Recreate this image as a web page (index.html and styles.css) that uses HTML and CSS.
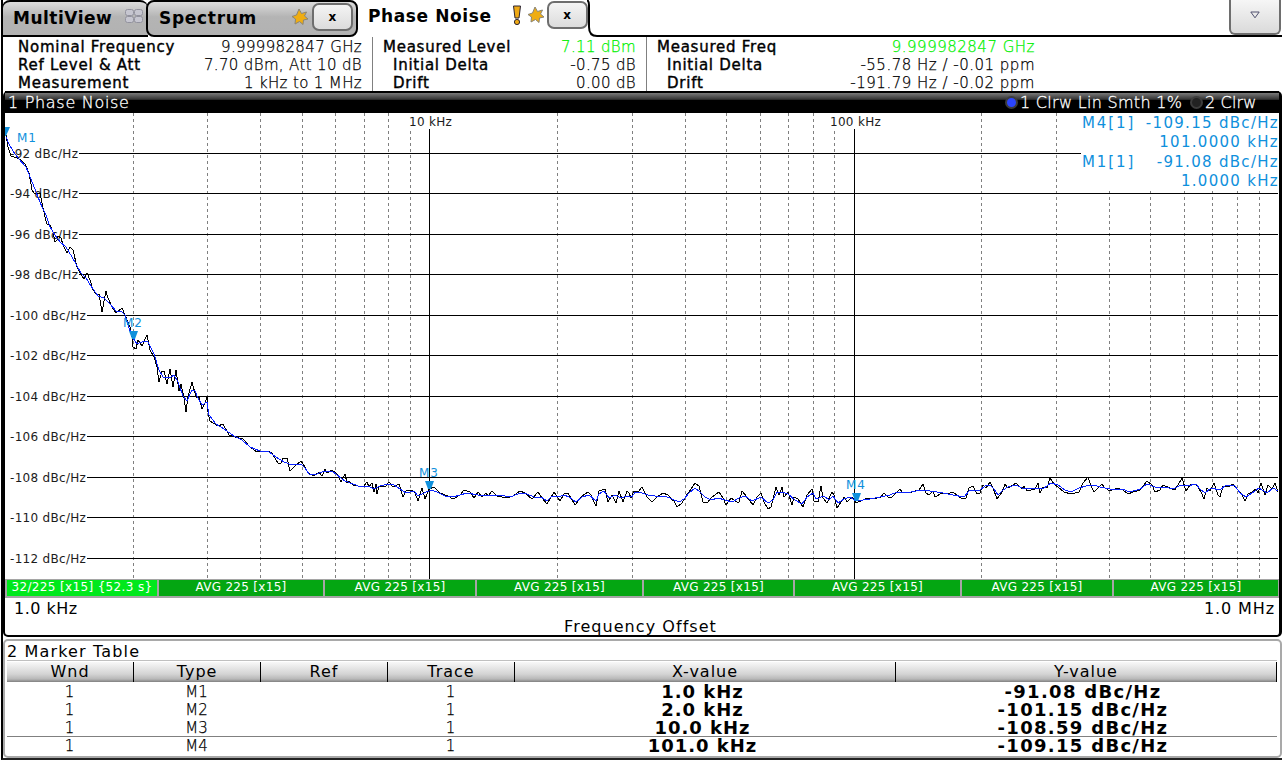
FILE: index.html
```
<!DOCTYPE html>
<html>
<head>
    <meta charset="utf-8">
    <title>Phase Noise</title>
    <link rel="stylesheet" href="styles.css">
</head>
<body>
    <div class="screen">
        <div class="tabs">
            <div class="tab tab-multi">
                <span>MultiView</span>
                <svg class="icon-grid" width="18" height="14" viewBox="0 0 18 14">
                    <rect x=".5" y=".5" width="8" height="6" rx="2"/>
                    <rect x="9.500" y=".5" width="8" height="6" rx="2"/>
                    <rect x=".5" y="7.500" width="8" height="6" rx="2"/>
                    <rect x="9.500" y="7.500" width="8" height="6" rx="2"/>
                </svg>
            </div>
            <div class="tab tab-spectrum">
                <span>Spectrum</span>
                <svg class="icon-star" width="18" height="18" viewBox="0 0 18 18">
                    <path d="M8 1L10.500 5.500L15.500 4L13.500 8L17 11L12.500 12L12 16.500L8.500 13.500L4 16L4.500 11L1 8.500L5.500 7Z"/>
                </svg>
                <button class="close">x</button>
            </div>
            <div class="tab tab-active">
                <span>Phase Noise</span>
                <svg class="icon-warn" width="10" height="21" viewBox="0 0 10 21">
                    <path d="M1.500 1H8.500L7 13H3Z"/>
                    <circle cx="5" cy="17" r="2.600"/>
                </svg>
                <svg class="icon-star" width="18" height="18" viewBox="0 0 18 18">
                    <path d="M8 1L10.500 5.500L15.500 4L13.500 8L17 11L12.500 12L12 16.500L8.500 13.500L4 16L4.500 11L1 8.500L5.500 7Z"/>
                </svg>
                <button class="close">x</button>
            </div>
            <svg class="tab-edge" width="12" height="37" viewBox="0 0 12 37">
                <path d="M0 0Q2 1 2 5V27Q2 36 10 36H12"/>
            </svg>
            <div class="tab-rest">
                <button class="menu">
                    <svg width="10" height="8" viewBox="0 0 10 8"><path d="M.8 1H9.200L5 6.800Z"/></svg>
                </button>
            </div>
        </div>

        <div class="info">
            <div class="info-col col-a">
                <div class="row"><b>Nominal Frequency</b><span>9.999982847 GHz</span></div>
                <div class="row"><b>Ref Level &amp; Att</b><span>7.70 dBm, Att 10 dB</span></div>
                <div class="row"><b>Measurement</b><span>1 kHz to 1 MHz</span></div>
            </div>
            <div class="info-col col-b">
                <div class="row"><b>Measured Level</b><span class="green">7.11 dBm</span></div>
                <div class="row sub"><b>Initial Delta</b><span>-0.75 dB</span></div>
                <div class="row sub"><b>Drift</b><span>0.00 dB</span></div>
            </div>
            <div class="info-col col-c">
                <div class="row"><b>Measured Freq</b><span class="green">9.999982847 GHz</span></div>
                <div class="row sub"><b>Initial Delta</b><span>-55.78 Hz / -0.01 ppm</span></div>
                <div class="row sub"><b>Drift</b><span>-191.79 Hz / -0.02 ppm</span></div>
            </div>
        </div>

        <div class="chart">
            <div class="chart-title">
                <span class="name">1 Phase Noise</span>
                <i class="led on"></i><span class="trace-1">1 Clrw Lin Smth 1%</span>
                <i class="led"></i><span class="trace-2">2 Clrw</span>
            </div>
            <div class="plot-wrap">
                <svg class="plot" width="1273" height="466" viewBox="5 113 1273 466">
                    <path class="minor" d="M133.500 113V579M207.500 113V579M260.500 113V579M302.500 113V579M335.500 113V579M364.500 113V579M388.500 113V579M410.500 131V579M557.500 113V579M632.500 113V579M685.500 113V579M726.500 113V579M760.500 113V579M788.500 113V579M813.500 113V579M834.500 131V579M981.500 113V579M1056.500 113V579M1109.500 191V579M1150.500 191V579M1184.500 191V579M1212.500 191V579M1237.500 191V579M1259.500 191V579"/>
                    <path class="major" d="M429.500 129V579M854.500 129V579M79 153.500H1081M79 193.500H1278M79 234.500H1278M79 274.500H1278M87 315.500H1278M87 355.500H1278M87 396.500H1278M87 436.500H1278M87 477.500H1278M87 517.500H1278M87 558.500H1278"/>
                    <g class="y-labels">
                        <text x="10" y="158">-92 dBc/Hz</text>
                        <text x="10" y="198">-94 dBc/Hz</text>
                        <text x="10" y="239">-96 dBc/Hz</text>
                        <text x="10" y="279">-98 dBc/Hz</text>
                        <text x="10" y="320">-100 dBc/Hz</text>
                        <text x="10" y="360">-102 dBc/Hz</text>
                        <text x="10" y="401">-104 dBc/Hz</text>
                        <text x="10" y="441">-106 dBc/Hz</text>
                        <text x="10" y="482">-108 dBc/Hz</text>
                        <text x="10" y="522">-110 dBc/Hz</text>
                        <text x="10" y="563">-112 dBc/Hz</text>
                    </g>
                    <text class="x-label" x="409" y="126">10 kHz</text>
                    <text class="x-label" x="830" y="126">100 kHz</text>
                    <polyline class="raw" points="6,135 8,147 11,156 17,158 21,160 25,164 29,173 32,190 34,193 40,193 42,203 45,217 47,224 50,225 53,232 55,242 57,240 58,236 61,238 63,245 67,253 70,247 73,250 77,267 80,273 84,279 87,273 90,280 93,290 97,295 99,294 102,312 106,291 108,298 112,307 116,313 122,308 125,315 130,327 132,337 133,347 136,349 138,340 142,346 147,335 150,350 154,357 157,367 159,382 162,371 164,371 167,384 170,369 173,387 176,370 179,391 181,384 184,398 186,412 188,397 192,382 196,397 199,397 202,409 205,403 207,397 208,412 210,421 218,426 223,424 229,435 235,437 243,439 250,447 257,452 267,451 272,453 276,460 278,463 281,463 283,458 287,458 290,471 295,466 301,461 305,467 308,473 314,476 319,472 322,476 325,469 327,473 332,470 337,474 341,482 345,474 347,483 349,481 353,485 358,486 363,487 367,482 369,487 372,483 374,492 376,484 377,494 379,486 385,487 389,482 393,487 399,484 403,497 406,491 412,490 415,493 418,501 422,488 425,499 429,489 434,487 440,493 448,496 453,499 460,495 464,490 470,492 474,498 478,492 482,497 486,493 488,496 492,491 497,496 507,498 513,496 520,491 525,493 532,499 538,492 542,498 547,504 554,492 560,501 564,494 568,493 575,505 582,496 588,492 591,495 596,506 599,491 605,489 608,502 612,495 616,503 619,491 623,502 627,491 629,493 631,498 634,491 638,492 642,487 647,497 652,502 657,497 663,493 668,495 672,500 674,501 677,507 682,503 686,496 691,489 695,483 699,486 703,502 707,503 712,497 719,492 723,498 726,505 731,498 737,502 739,502 742,491 747,497 753,505 757,497 761,493 764,502 768,509 771,507 774,495 776,487 779,495 782,487 784,497 788,492 792,505 794,497 798,499 803,507 807,495 812,489 814,501 818,502 821,486 823,498 827,503 832,492 834,495 837,508 841,502 844,497 847,502 852,497 856,503 863,500 868,498 877,498 881,497 884,493 888,497 892,497 900,489 903,493 912,492 919,490 923,484 926,493 929,495 933,491 935,497 942,493 947,494 953,492 957,495 962,499 966,498 969,488 973,486 977,494 980,493 983,485 986,488 990,482 993,488 997,499 1002,492 1005,484 1008,488 1016,483 1022,489 1024,486 1027,491 1035,489 1038,483 1040,493 1043,487 1047,488 1050,478 1054,484 1058,487 1064,492 1071,494 1079,492 1083,483 1088,477 1091,486 1094,492 1102,484 1105,488 1110,491 1117,488 1123,490 1128,494 1133,492 1140,490 1147,481 1152,485 1155,492 1160,490 1163,485 1170,488 1175,490 1182,478 1186,491 1190,485 1196,484 1201,492 1204,499 1207,488 1210,491 1214,483 1218,495 1220,497 1223,486 1230,486 1233,484 1237,489 1242,495 1245,501 1248,494 1252,492 1256,489 1258,493 1261,483 1265,495 1268,485 1272,489 1275,483 1278,492"/>
                    <polyline class="smooth" points="6,137 9,144 13,151 18,158 26,167 31,179 36,192 42,207 46,215 50,227 55,235 60,242 66,247 72,257 76,264 81,273 86,278 91,286 98,296 104,298 110,304 116,311 122,312 125,315 129,328 133,338 137,344 144,341 148,342 154,354 159,370 163,377 170,378 174,375 178,382 183,396 187,401 192,390 195,391 198,398 202,405 207,402 209,415 216,424 224,429 234,436 242,440 250,447 260,451 269,452 276,457 284,462 292,465 301,464 305,468 309,474 314,475 322,472 332,471 337,475 345,481 353,484 361,487 368,486 374,489 380,486 388,484 394,485 400,489 406,493 414,491 418,496 424,493 431,490 437,492 445,496 453,497 460,495 467,493 478,495 490,495 505,496 513,496 520,493 527,494 534,497 541,497 547,501 552,496 558,497 564,495 569,497 576,502 582,497 589,495 596,501 599,494 604,491 609,498 615,495 621,498 627,496 632,497 635,492 642,493 648,495 655,496 665,496 672,499 679,502 684,499 689,493 695,488 700,492 705,497 711,500 718,498 725,500 732,502 739,498 745,496 752,501 761,497 768,503 773,500 777,492 782,492 788,494 795,500 802,504 807,497 813,493 816,499 824,496 829,500 833,496 838,503 844,499 850,497 856,501 863,500 870,499 880,497 890,495 897,492 907,493 920,490 930,491 943,493 953,495 964,497 970,490 980,490 985,486 990,485 994,489 998,495 1003,490 1008,487 1016,485 1022,488 1032,488 1044,488 1051,483 1058,485 1065,490 1071,492 1079,488 1086,486 1094,485 1100,487 1110,489 1122,489 1130,492 1140,489 1147,484 1155,487 1165,487 1173,489 1181,485 1187,486 1196,484 1200,489 1205,493 1211,488 1220,490 1226,485 1235,486 1240,493 1246,497 1252,493 1259,488 1267,493 1273,488 1278,491"/>
                    <g class="markers">
                        <path d="M5 127H10L6 136H5Z"/>
                        <path d="M129 331H138L135 339H132Z"/>
                        <path d="M425 481H434L431 489H428Z"/>
                        <path d="M852 493H861L858 501H855Z"/>
                        <text x="17" y="142">M1</text>
                        <text x="123" y="327">M2</text>
                        <text x="419" y="477">M3</text>
                        <text x="846" y="489">M4</text>
                    </g>
                </svg>
                <div class="readout">
                    <div><span>M4[1]</span><span>-109.15 dBc/Hz</span></div>
                    <div><span></span><span>101.0000 kHz</span></div>
                    <div><span>M1[1]</span><span>-91.08 dBc/Hz</span></div>
                    <div><span></span><span>1.0000 kHz</span></div>
                </div>
            </div>
            <div class="avg-bar">
                <div class="running">32/225 [x15] {52.3 s}</div>
                <div>AVG 225 [x15]</div>
                <div>AVG 225 [x15]</div>
                <div>AVG 225 [x15]</div>
                <div>AVG 225 [x15]</div>
                <div>AVG 225 [x15]</div>
                <div>AVG 225 [x15]</div>
                <div>AVG 225 [x15]</div>
            </div>
            <div class="range"><span>1.0 kHz</span><span class="stop">1.0 MHz</span></div>
            <div class="axis-name">Frequency Offset</div>
        </div>

        <div class="marker-table">
            <div class="table-title">2 Marker Table</div>
            <div class="thead">
                <span>Wnd</span><span>Type</span><span>Ref</span><span>Trace</span><span>X-value</span><span>Y-value</span>
            </div>
            <div class="tr"><span>1</span><span>M1</span><span></span><span>1</span><b class="xv">1.0 kHz</b><b class="yv">-91.08 dBc/Hz</b></div>
            <div class="tr"><span>1</span><span>M2</span><span></span><span>1</span><b class="xv">2.0 kHz</b><b class="yv">-101.15 dBc/Hz</b></div>
            <div class="tr"><span>1</span><span>M3</span><span></span><span>1</span><b class="xv">10.0 kHz</b><b class="yv">-108.59 dBc/Hz</b></div>
            <div class="tr last"><span>1</span><span>M4</span><span></span><span>1</span><b class="xv">101.0 kHz</b><b class="yv">-109.15 dBc/Hz</b></div>
        </div>
    </div>
</body>
</html>
```
FILE: styles.css
```
* {
    box-sizing: border-box;
}
body {
    margin: 0;
    background: #fff;
    color: #000;
    font-family: "DejaVu Sans", Verdana, sans-serif;
    font-size: 15px;
    overflow: hidden;
}
.screen {
    width: 1281px;
    height: 760px;
    border-left: 2px solid #000;
    border-bottom: 2px solid #222;
    margin-left: 1px;
    white-space: nowrap;
}

/* tabs */
.tabs {
    display: flex;
    height: 37px;
    margin-left: -1px;
}
.tab {
    display: flex;
    align-items: center;
    font-size: 17px;
    font-weight: bold;
    height: 37px;
}
.tab-multi, .tab-spectrum {
    border: 2px solid #000;
    background: linear-gradient(#dcdcdc, #b4b4b4 45%, #b2b2b2);
}
.tab-multi {
    width: 146px;
    padding-left: 10px;
    letter-spacing: 0.5px;
    border-radius: 8px 8px 0 0;
    gap: 13px;
    border-left-width: 1px;
    border-right: none;
}
.tab-multi span, .tab-spectrum span {
    margin-top: -1px;
}
.tab-spectrum {
    width: 212px;
    margin-left: -2px;
    padding-left: 11px;
    letter-spacing: 0.7px;
    border-radius: 8px;
}
.tab-spectrum .icon-star {
    margin-left: 34px;
}
.tab-active {
    width: 229px;
    padding-left: 10px;
    padding-bottom: 5px;
    letter-spacing: 0.6px;
}
.tab-active .icon-star {
    margin-left: 5px;
}
.icon-warn {
    margin-left: 20px;
}
.tab svg {
    flex: none;
}
.icon-grid {
    margin-top: -5px;
}
.icon-grid rect {
    fill: #c6c6d0;
    stroke: #92929e;
}
.tab-spectrum .icon-star {
    margin-top: -4px;
}
.tab-active svg {
    margin-top: -2px;
}
.icon-star path {
    fill: #efad12;
    stroke: #8a8577;
}
.icon-warn path, .icon-warn circle {
    fill: #efa914;
    stroke: #2c2533;
}
.close {
    width: 41px;
    height: 28px;
    padding: 0;
    border: 2px solid #6e6e6e;
    border-radius: 7px;
    background: linear-gradient(#f4f4f4, #dcdcdc);
    font: bold 12px "DejaVu Sans", sans-serif;
    flex: none;
}
.tab-spectrum .close {
    margin-left: 3px;
    margin-top: -4px;
}
.tab-active .close {
    margin-left: 2px;
    margin-top: -2px;
}
.tab-edge {
    flex: none;
}
.tab-edge path {
    fill: none;
    stroke: #000;
    stroke-width: 2;
}
.tab-rest {
    flex: 1;
    display: flex;
    justify-content: flex-end;
    align-items: flex-start;
    border-bottom: 2px solid #000;
}
.menu {
    width: 52px;
    height: 35px;
    margin-right: 1px;
    padding: 0 0 4px;
    border: 2px solid #6e6e6e;
    border-top: none;
    border-radius: 0 0 6px 6px;
    background: linear-gradient(#f6f6f6, #dadada);
}
.menu path {
    fill: none;
    stroke: #50506e;
}

/* channel info */
.info {
    display: flex;
    height: 54px;
}
.info-col {
    border-right: 1px solid #808080;
}
.col-a {
    width: 370px;
    padding: 0 10px 0 15px;
}
.col-b {
    width: 274px;
    padding: 0 10px;
}
.col-c {
    width: 397px;
    padding: 0 9px 0 10px;
    border-right: none;
}
.row {
    display: flex;
    justify-content: space-between;
    height: 18px;
    line-height: 20px;
}
.row b {
    font-weight: normal;
    letter-spacing: 0.75px;
    -webkit-text-stroke: 0.4px #000;
}
.row span {
    font-weight: 200;
    letter-spacing: 0.35px;
    -webkit-text-stroke: 0.25px;
}
.col-c .row span {
    letter-spacing: 0.5px;
}
.sub b {
    margin-left: 10px;
}
.row .green {
    color: #00f000;
}

/* chart window */
.chart {
    height: 546px;
    width: 1279px;
    border: solid #000;
    border-width: 0 3px 2px 2px;
    border-radius: 5px;
}
.chart-title {
    display: flex;
    align-items: center;
    height: 22px;
    background: linear-gradient(#000 0, #000 9%, #777 10%, #333 38%, #000 42%);
    color: #fff;
    font-size: 16px;
    padding-left: 3px;
}
.chart-title .name {
    width: 997px;
    letter-spacing: 0.7px;
}
.chart-title span {
    font-weight: 200;
    -webkit-text-stroke: 0.3px;
}
.led {
    width: 13px;
    height: 13px;
    border-radius: 50%;
    border: 2px solid #3c3c3c;
    background: #222;
    margin-right: 2px;
    flex: none;
}
.led.on {
    background: #2b45ff;
}
.trace-1 {
    width: 170px;
    letter-spacing: 0.3px;
}
.trace-2 {
    letter-spacing: 0.15px;
}
.plot-wrap {
    position: relative;
    height: 466px;
}
.plot {
    display: block;
}
.minor {
    stroke: #808080;
    stroke-dasharray: 3 3;
    shape-rendering: crispEdges;
}
.major {
    stroke: #000;
    shape-rendering: crispEdges;
}
.y-labels, .x-label {
    font-size: 12px;
    letter-spacing: 0.3px;
    fill: #1c1c1c;
}
.raw, .smooth {
    fill: none;
    stroke: #000;
    shape-rendering: crispEdges;
}
.smooth {
    stroke: #0a22ff;
}
.markers {
    fill: #0f90dc;
    font-size: 12px;
    letter-spacing: 0.9px;
}
/* sits over the upper right corner of the grid */
.readout {
    position: absolute;
    top: 0;
    right: 0;
    width: 197px;
    height: 77px;
    background: #fff;
    color: #0f90dc;
}
.readout div {
    display: flex;
    justify-content: space-between;
    height: 19.4px;
    line-height: 20px;
    letter-spacing: 1.3px;
}
.readout span:first-child {
    letter-spacing: 1.9px;
}

/* average progress */
.avg-bar {
    display: grid;
    grid-template-columns: 150px 164px 150px 165px 149px 165px 150px 164px;
    column-gap: 2px;
    height: 19px;
    padding: 1px 0 2px 2px;
    background: #a5a5a5;
    color: #fff;
    font-size: 12px;
    line-height: 15px;
    letter-spacing: 0.3px;
    text-align: center;
}
.avg-bar div {
    background: #04a612;
}
.avg-bar .running {
    background: #00e81c;
    letter-spacing: 0.35px;
}
.range {
    display: flex;
    justify-content: space-between;
    padding: 0 4px 0 9px;
    height: 18px;
    font-size: 16px;
    line-height: 21px;
    letter-spacing: 0.5px;
}
.range .stop {
    letter-spacing: 0.9px;
}
.axis-name {
    text-align: center;
    font-size: 16px;
    line-height: 22px;
    height: 19px;
    letter-spacing: 1.05px;
    padding-right: 3px;
}

/* marker table */
.marker-table {
    margin-top: 2px;
    width: 1279px;
    height: 119px;
    border: 2px solid #a9a9a9;
    border-radius: 5px;
    padding: 0 3px 0 2px;
}
.table-title {
    height: 20px;
    line-height: 21px;
    font-size: 16px;
    letter-spacing: 1.15px;
    border-bottom: 1px solid #c0c0c0;
}
.thead, .tr {
    display: grid;
    grid-template-columns: 127px 127px 127px 127px 381px 1fr;
    text-align: center;
}
.thead {
    height: 20px;
    margin-top: 1px;
    line-height: 19px;
    font-size: 16px;
    letter-spacing: 1px;
    background: linear-gradient(#f8f8f8, #d4d4d4 60%, #b8b8b8 85%, #808080);
}
.thead span {
    border-right: 1px solid #000;
}
.tr {
    height: 18px;
    line-height: 20px;
    font-weight: 200;
}
.tr span {
    padding-right: 2px;
    -webkit-text-stroke: 0.25px;
}
.tr.last {
    border-top: 1px solid #808080;
    line-height: 18px;
}
.xv, .yv {
    font-size: 18px;
    font-weight: bold;
    letter-spacing: 0.95px;
    padding-right: 6px;
}
.yv {
    letter-spacing: 1.3px;
    padding-right: 7px;
}
```
